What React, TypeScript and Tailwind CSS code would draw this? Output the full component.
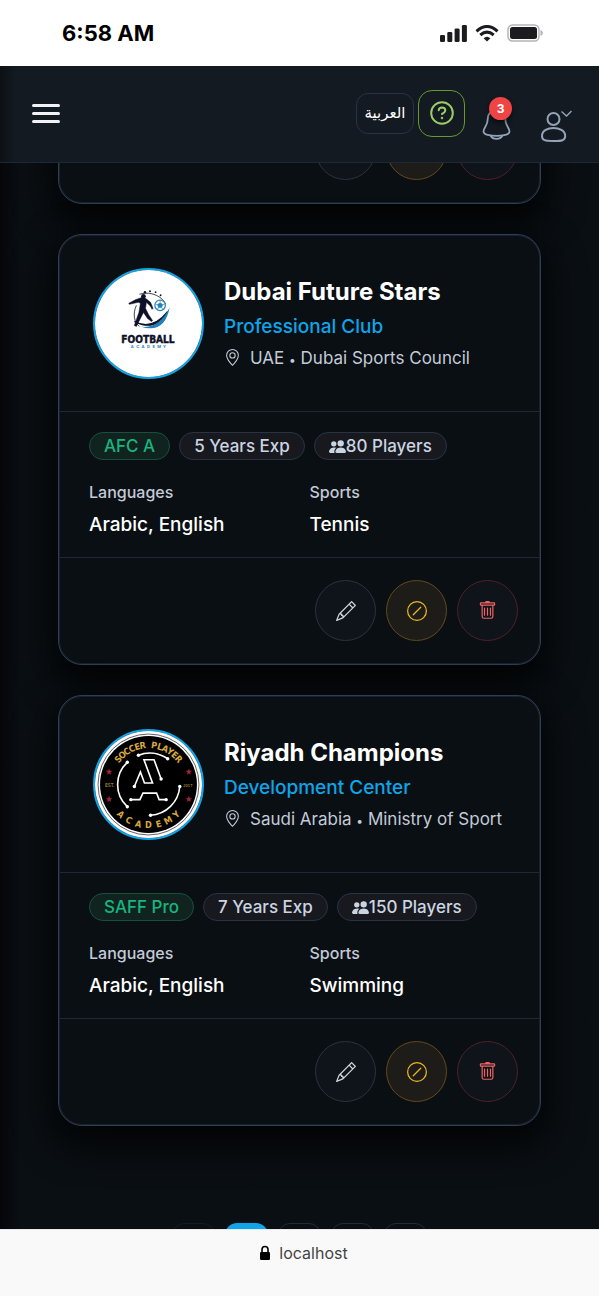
import type { ReactNode } from 'react';
import { BsGeoAlt, BsPencil, BsPeopleFill, BsSlashCircle, BsTrash } from 'react-icons/bs';

type Coach = {
  name: string;
  role: string;
  country: string;
  authority: string;
  license: string;
  experience: string;
  players: string;
  languages: string;
  sports: string;
  logo: ReactNode;
};

function FootballLogo() {
  return (
    <svg viewBox="0 0 106 106" className="size-full" role="img" aria-label="Football Academy logo">
      <rect width="106" height="106" fill="#fff" />
      <path d="M44 24 C57 20 68 28 70 34" fill="none" stroke="#15172b" strokeWidth="0.8" />
      <path d="M41 35 C37 44 39 52 44 56" fill="none" stroke="#15172b" strokeWidth="0.8" />
      <path d="M39 51 Q57 60 72 41 Q60 62 39 51 Z" fill="#0d1128" stroke="#0d1128" strokeWidth="1" />
      <path d="M45 56 Q63 59 74 37 Q69 64 45 56 Z" fill="#237fb8" />
      <circle cx="64.500" cy="35" r="5.200" fill="#fff" stroke="#3388bd" strokeWidth="1.300" />
      <path d="M64.500 32.400 l2.500 1.900 l-1 2.900 h-3 l-1-2.900 Z M64.500 30 v2 M59.500 33.500 l2.500 1 M69.500 33.500 l-2.500 1 M62 39 l1-2 M67 39 l-1-2" fill="#237fb8" stroke="#3388bd" strokeWidth="0.700" />
      <circle cx="48" cy="26" r="2.300" fill="#0d1128" />
      <path d="M47 27 L40 29.500 L33.500 33 L34 34 L43 32 L45 33 L43.500 42 L41 49 L39 55 L41 56 L45 48 L48 42 L52 48 L56 51 L57 50 L53 44 L50 38 L51 32 L55 36 L56.500 39 L57.500 38 L55 32 L50 28 Z" fill="#0d1128" stroke="#0d1128" strokeWidth="0.500" />
      <g fill="#0d1128">
        <circle cx="49.500" cy="22" r="1.200" />
        <circle cx="54.500" cy="21" r="1" />
        <circle cx="60" cy="22" r="0.900" />
        <circle cx="65" cy="25" r="0.900" />
      </g>
      <text x="52.500" y="72" textAnchor="middle" stroke="#0d1128" strokeWidth="0.400" className="fill-[#0d1128] font-['DejaVu_Sans_Condensed','DejaVu_Sans',sans-serif] text-[10px] font-bold">
        FOOTBALL
      </text>
      {'ACADEMY'.split('').map((c, i) => (
        <text key={i} x={37 + i * 5.3} y="77.500" textAnchor="middle" className="fill-[#237fb8] font-[Inter,sans-serif] text-[4px] font-bold">
          {c}
        </text>
      ))}
    </svg>
  );
}

function Arc({ text, radius, from, to, inward }: { text: string; radius: number; from: number; to: number; inward?: boolean }) {
  const letters = text.split('');
  return (
    <>
      {letters.map((c, i) => {
        const a = from + ((to - from) * i) / (letters.length - 1);
        return (
          <text
            key={i}
            x="53"
            y={inward ? 53 + radius : 53 - radius}
            textAnchor="middle"
            transform={`rotate(${a} 53 53)`}
            className="fill-[#d9a93f] font-['DejaVu_Sans_Condensed','DejaVu_Sans',sans-serif] text-[9px] font-bold"
          >
            {c}
          </text>
        );
      })}
    </>
  );
}

function Star({ x, y }: { x: number; y: number }) {
  return <path transform={`translate(${x} ${y})`} d="M0-3.300 L0.900-1 L3.200-1 L1.300 0.500 L2 2.900 L0 1.500 L-2 2.900 L-1.300 0.500 L-3.200-1 L-0.900-1 Z" fill="#a5213c" />;
}

function SoccerLogo() {
  return (
    <svg viewBox="0 0 106 106" className="size-full" role="img" aria-label="Soccer Player Academy logo">
      <rect width="106" height="106" fill="#fff" />
      <circle cx="53" cy="53" r="50" fill="none" stroke="#222" strokeWidth="0.700" />
      <circle cx="53" cy="53" r="48" fill="#000" />
      <Arc text="SOCCER PLAYER" radius={36} from={-50} to={50} />
      <Arc text="ACADEMY" radius={43.5} from={43} to={-43} inward />
      <text x="14.500" y="55" textAnchor="middle" className="fill-[#d9a93f] font-['DejaVu_Sans_Condensed',sans-serif] text-[5px]">EST.</text>
      <text x="92" y="55" textAnchor="middle" className="fill-[#d9a93f] font-['DejaVu_Sans_Condensed',sans-serif] text-[4px]">2017</text>
      <Star x={14} y={40.5} />
      <Star x={93} y={40.5} />
      <Star x={14} y={67.5} />
      <Star x={93} y={67.5} />
      <g fill="none" stroke="#fff" strokeWidth="1.600">
        <path d="M32 31 A30 30 0 0 0 32 75" />
        <path d="M43 24 A31 31 0 0 1 72 27.500" />
        <path d="M84 55 A31 31 0 0 1 55 83.500" />
        <path d="M39 55 L45 40.500 L49 51.500 H57 L48.500 28.500 H58.500 L65.500 47.500" />
        <path d="M35.500 68 H44.500 L47.500 61.500 H61 L63.500 68 H70.500" />
      </g>
      <g fill="#fff">
        {[[32, 31], [32, 75], [43, 24], [72, 27.5], [84, 55], [55, 83.5], [39, 55], [65.5, 47.5], [35.5, 68], [70.5, 68]].map(([cx, cy], i) => (
          <circle key={i} cx={cx} cy={cy} r="1.700" />
        ))}
      </g>
    </svg>
  );
}

const coaches: Coach[] = [
  {
    name: 'Dubai Future Stars',
    role: 'Professional Club',
    country: 'UAE',
    authority: 'Dubai Sports Council',
    license: 'AFC A',
    experience: '5 Years Exp',
    players: '80 Players',
    languages: 'Arabic, English',
    sports: 'Tennis',
    logo: <FootballLogo />,
  },
  {
    name: 'Riyadh Champions',
    role: 'Development Center',
    country: 'Saudi Arabia',
    authority: 'Ministry of Sport',
    license: 'SAFF Pro',
    experience: '7 Years Exp',
    players: '150 Players',
    languages: 'Arabic, English',
    sports: 'Swimming',
    logo: <SoccerLogo />,
  },
];

function StatusBar() {
  return (
    <div className="flex h-[66px] shrink-0 items-center justify-between bg-white pr-14 pl-[62px]">
      <span className="text-[22px] font-bold text-black">6:58 AM</span>
      <div className="flex items-center gap-2">
        <svg viewBox="0 0 27 17" className="h-[17px] w-[27px]" fill="#1c1c1e" aria-hidden="true">
          <rect x="0" y="10" width="5" height="7" rx="1.300" />
          <rect x="7.300" y="7" width="5" height="10" rx="1.300" />
          <rect x="14.600" y="3.500" width="5" height="13.500" rx="1.300" />
          <rect x="21.900" y="0" width="5" height="17" rx="1.300" />
        </svg>
        <svg viewBox="0 0 24 17" className="h-[17px] w-6" fill="none" stroke="#1c1c1e" strokeWidth="3" aria-hidden="true">
          <path d="M1.500 6.300 Q12-3.300 22.500 6.300" />
          <path d="M5.300 10 Q12 4.200 18.700 10" />
          <path d="M12 16.600 L8.600 13.200 Q12 10.200 15.400 13.200 Z" fill="#1c1c1e" stroke="none" />
        </svg>
        <svg viewBox="0 0 36 18" className="h-[18px] w-9" aria-hidden="true">
          <rect x="1" y="1" width="31" height="16" rx="4.500" fill="none" stroke="#b5b5b5" strokeWidth="1.500" />
          <rect x="3" y="3" width="27" height="12" rx="2.500" fill="#1c1c1e" />
          <path d="M33.500 6 Q36 7 36 9 Q36 11 33.500 12 Z" fill="#b5b5b5" />
        </svg>
      </div>
    </div>
  );
}

function Header() {
  return (
    <header className="flex h-[97px] shrink-0 items-center justify-between border-b border-[#1e2836] bg-[#131a21] bg-linear-to-r from-[#0d1115] to-[#131a21] to-[16px] pr-[27px] pb-[2px] pl-8">
      <button type="button" aria-label="Open menu" className="flex w-7 flex-col gap-[5px]">
        <span className="h-[3px] rounded-full bg-[#f1f1f6]" />
        <span className="h-[3px] rounded-full bg-[#f1f1f6]" />
        <span className="h-[3px] rounded-full bg-[#f1f1f6]" />
      </button>
      <div className="flex items-center">
        <button type="button" lang="ar" className="h-[41px] w-[58px] rounded-xl border border-[#2a3344] font-['DejaVu_Sans',sans-serif] text-[15px] text-white">
          العربية
        </button>
        <button type="button" aria-label="Help" className="ml-1 flex size-[47px] items-center justify-center rounded-[14px] border border-[#659a2f]">
          <svg viewBox="0 0 24 24" className="size-6" fill="none" stroke="#9ccc65" strokeWidth="2" strokeLinecap="round" aria-hidden="true">
            <circle cx="12" cy="12" r="10.800" />
            <path d="M8.700 9.300 Q8.900 6.500 12 6.500 Q15.300 6.700 15.300 9.300 Q15.200 11.400 12 13" />
            <circle cx="12" cy="17" r="0.500" strokeWidth="1.500" />
          </svg>
        </button>
        <button type="button" aria-label="Notifications, 3 unread" className="relative mt-[22px] ml-4 size-8">
          <svg viewBox="0 0 32 32" className="size-8" fill="none" stroke="#94a3b8" strokeWidth="1.800" aria-hidden="true">
            <path d="M15.500 2 C10 2 6.800 6 6.800 10.500 C6.800 15 6 16.500 4 19.500 C1 24 3 26 6.500 26.800 C12 28 19 28 24.500 26.800 C28 26 30 24 27 19.500 C25 16.500 24.200 15 24.200 10.500 C24.200 6 21 2 15.500 2 Z" />
            <path d="M9.500 27.500 C12 32 19 32 21.500 27.500" />
          </svg>
          <span className="absolute -top-[11px] left-2 flex size-[23px] items-center justify-center rounded-full bg-[#ef4444] text-xs font-bold text-white shadow-md shadow-black/50">
            3
          </span>
        </button>
        <button type="button" aria-label="Account" className="mt-[26px] ml-7 flex h-[34px] w-[31px]">
          <svg viewBox="0 0 31 34" className="h-[34px] w-[31px]" fill="none" stroke="#94a3b8" strokeWidth="2" aria-hidden="true">
            <circle cx="12.500" cy="10" r="6" />
            <path d="M12.500 19 C18 19 24.200 21.500 24.200 27 C24.200 31.500 21 32 12.500 32 C4 32 1 31.500 1 27 C1 21.500 7 19 12.500 19 Z" />
            <path d="M20.500 2.500 L25.500 7 L30.500 2" strokeWidth="1.400" />
          </svg>
        </button>
      </div>
    </header>
  );
}

function CardActions() {
  return (
    <div className="flex justify-end gap-[10px] border-t border-[#1e2836] py-[22px] pr-[21px]">
      <button type="button" aria-label="Edit" className="flex size-[61px] items-center justify-center rounded-full border border-[#2d323f] bg-[#0f131a] text-[#d0d5dd]">
        <BsPencil className="size-5" />
      </button>
      <button type="button" aria-label="Suspend" className="flex size-[61px] items-center justify-center rounded-full border border-[#62491b] bg-[#1e1c18] text-[#eab91f]">
        <BsSlashCircle className="size-5" />
      </button>
      <button type="button" aria-label="Delete" className="flex size-[61px] items-center justify-center rounded-full border border-[#4f2128] bg-[#0f131a] text-[#f06464]">
        <BsTrash className="size-[19px]" />
      </button>
    </div>
  );
}

const cardFrame = 'border border-[#303e54] bg-[#0a0f13] p-px shadow-[inset_0_0_0_1px_#182130,0_14px_36px_6px_rgba(0,0,0,0.8)]';

function CoachCard({ coach }: { coach: Coach }) {
  return (
    <article className={`rounded-3xl ${cardFrame}`}>
      <div className="flex items-center gap-5 px-[33px] py-8">
        <div className="size-[111px] shrink-0 overflow-hidden rounded-full border-[2px] border-[#0ea5e9]">{coach.logo}</div>
        <div className="flex min-w-0 flex-col gap-1 pb-[2px]">
          <h2 className="text-2xl leading-[34px] font-bold text-white">{coach.name}</h2>
          <p className="text-[19px] leading-7 font-medium text-[#0ea5e9]">{coach.role}</p>
          <p className="flex items-center gap-[9px] text-[17px] leading-[26px] text-[#c3cad8]">
            <BsGeoAlt className="size-[17px]" aria-hidden="true" />
            <span>
              {coach.country} <span className="text-xs">•</span> {coach.authority}
            </span>
          </p>
        </div>
      </div>
      <div className="border-t border-[#1e2836] px-[29px] pt-5 pb-[18px]">
        <div className="flex gap-[9px] text-[17px] leading-[26px] font-medium text-[#cbd5e1]">
          <span className="rounded-full border border-[#17513e] bg-[#11231f] px-[14px] text-[#17b57f]">{coach.license}</span>
          <span className="rounded-full border border-[#293345] bg-[#17191e] px-[14px]">{coach.experience}</span>
          <span className="flex items-center rounded-full border border-[#293345] bg-[#17191e] px-[14px]">
            <BsPeopleFill className="size-[17px]" aria-hidden="true" />
            {coach.players}
          </span>
        </div>
        <dl className="mt-5 grid grid-cols-2 gap-5">
          <div>
            <dt className="text-base leading-6 font-medium text-[#c3cad8]">Languages</dt>
            <dd className="mt-[7px] text-[19px] leading-7 font-medium text-white">{coach.languages}</dd>
          </div>
          <div>
            <dt className="text-base leading-6 font-medium text-[#c3cad8]">Sports</dt>
            <dd className="mt-[7px] text-[19px] leading-7 font-medium text-white">{coach.sports}</dd>
          </div>
        </dl>
      </div>
      <CardActions />
    </article>
  );
}

export default function App() {
  return (
    <div className="flex h-screen flex-col bg-[#0a0f13] font-[Inter,sans-serif]">
      <StatusBar />
      <Header />
      <main className="min-h-0 flex-1 overflow-hidden bg-linear-to-r from-[#050609] to-[#0a0f13] to-[20px]">
        <div className="-mt-[69px] flex flex-col gap-[30px] px-[58px]">
          <div className={`rounded-b-3xl ${cardFrame}`}>
            <CardActions />
          </div>
          {coaches.map((coach) => (
            <CoachCard key={coach.name} coach={coach} />
          ))}
        </div>
        <nav aria-label="Pagination" className="mt-[97px] flex justify-center gap-[10px]">
          <button type="button" disabled aria-label="Previous page" className="h-[43px] w-[43px] rounded-xl border border-[#161b24]" />
          <button type="button" aria-current="page" aria-label="Page 1" className="h-[43px] w-[43px] rounded-xl bg-[#0ea5e9]" />
          <button type="button" aria-label="Page 2" className="h-[43px] w-[43px] rounded-xl border border-[#222b3a]" />
          <button type="button" aria-label="Page 3" className="h-[43px] w-[43px] rounded-xl border border-[#222b3a]" />
          <button type="button" aria-label="Next page" className="h-[43px] w-[43px] rounded-xl border border-[#222b3a]" />
        </nav>
      </main>
      <footer className="flex h-[67px] shrink-0 items-start justify-center gap-2 border-t border-[#e8e8ec] bg-[#f9f9f9] pt-[9px] pl-2">
        <svg viewBox="0 0 12 16" className="mt-[6px] h-4 w-3" aria-hidden="true">
          <path d="M3 8 V4.500 Q3 1.500 6 1.500 Q9 1.500 9 4.500 V8" fill="none" stroke="#000" strokeWidth="1.600" />
          <rect x="1" y="7" width="10" height="8" rx="1.200" fill="#000" />
        </svg>
        <span className="text-base leading-7 text-[#444]">localhost</span>
      </footer>
    </div>
  );
}
